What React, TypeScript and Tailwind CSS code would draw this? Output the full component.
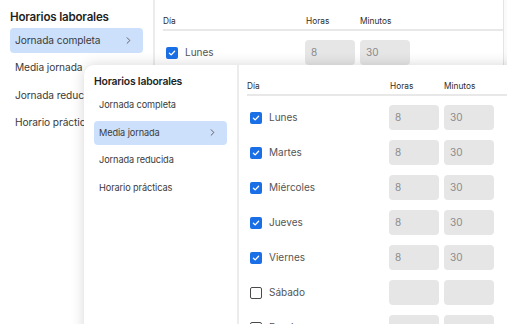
import { ChevronRight } from 'lucide-react';

const menu = ['Jornada completa', 'Media jornada', 'Jornada reducida', 'Horario prácticas'];

const days = [
  { name: 'Lunes', on: true },
  { name: 'Martes', on: true },
  { name: 'Miércoles', on: true },
  { name: 'Jueves', on: true },
  { name: 'Viernes', on: true },
  { name: 'Sábado', on: false },
  { name: 'Domingo', on: false },
];

function Check({ on }: { on: boolean }) {
  if (!on) {
    return <span className="w-3 h-3 rounded-[2px] border-[1.5px] border-[#4a4a4a] bg-white shrink-0" />;
  }
  return (
    <span className="w-3 h-3 rounded-[2px] bg-[#1b6fe6] flex items-center justify-center shrink-0">
      <svg width="8" height="8" viewBox="0 0 8 8" fill="none">
        <path d="M1.4 4.2 3.2 5.9 6.6 2.2" stroke="white" strokeWidth="1.3" strokeLinecap="round" strokeLinejoin="round" />
      </svg>
    </span>
  );
}

function Sidebar({ active, big }: { active: number; big?: boolean }) {
  return (
    <aside className="w-[155px] shrink-0 border-r-2 border-[#ececec] px-[10px] pt-[8px]">
      <h3
        className={`font-semibold text-[#1f1f1f] leading-[18px] tracking-[-0.2px] ${
          big ? 'text-[11.6px]' : 'text-[10.4px]'
        }`}
      >
        Horarios laborales
      </h3>
      <ul className="mt-[2px] flex flex-col gap-[3px]">
        {menu.map((m, i) => (
          <li
            key={m}
            className={`h-[24.5px] flex items-center justify-between rounded-[4px] pl-[5px] pr-[9px] tracking-[-0.1px] ${
              i === active ? 'bg-[#cce0fb]' : ''
            } ${big ? 'text-[10.2px]' : 'text-[9.2px]'} text-[#3b3b3b]`}
          >
            <span>{m}</span>
            {i === active && <ChevronRight size={11} strokeWidth={2} className="text-[#555]" />}
          </li>
        ))}
      </ul>
    </aside>
  );
}

function Table() {
  return (
    <div className="flex-1 pl-[8px] pt-[15px]">
      <div className="flex items-center h-[12px] text-[8.3px] text-[#2d2d2d] border-b-2 border-[#e8e8e8] pb-[2px] box-content">
        <span className="w-[143px]">Día</span>
        <span className="w-[54px]">Horas</span>
        <span>Minutos</span>
      </div>
      <div className="flex flex-col gap-[10px] pt-[9px]">
        {days.map((d) => (
          <div key={d.name} className="flex items-center h-[25px]">
            <div className="w-[142px] flex items-center gap-[7px] pl-[3px]">
              <Check on={d.on} />
              <span className="text-[10px] text-[#555]">{d.name}</span>
            </div>
            <div className="w-[50px] h-[25px] rounded-[4px] bg-[#e6e6e6] text-[10px] text-[#8b8b8b] flex items-center pl-[6px]">
              {d.on ? '8' : ''}
            </div>
            <div className="ml-[5px] w-[50px] h-[25px] rounded-[4px] bg-[#e6e6e6] text-[10px] text-[#8b8b8b] flex items-center pl-[6px]">
              {d.on ? '30' : ''}
            </div>
          </div>
        ))}
      </div>
    </div>
  );
}

export default function App() {
  return (
    <div
      className="relative w-[507px] h-[324px] overflow-hidden bg-[#fafafa]"
      style={{ fontFamily: 'Inter, "Noto Sans", sans-serif' }}
    >
      <div className="absolute left-0 top-0 w-[504px] h-[340px] bg-white border-r border-[#e4e4e4] flex">
        <Sidebar active={0} big />
        <Table />
      </div>
      <div className="absolute left-[84px] top-[65px] w-[440px] h-[300px] bg-white rounded-tl-[10px] shadow-[0_0_14px_rgba(0,0,0,0.16)] flex">
        <Sidebar active={1} />
        <Table />
      </div>
    </div>
  );
}
